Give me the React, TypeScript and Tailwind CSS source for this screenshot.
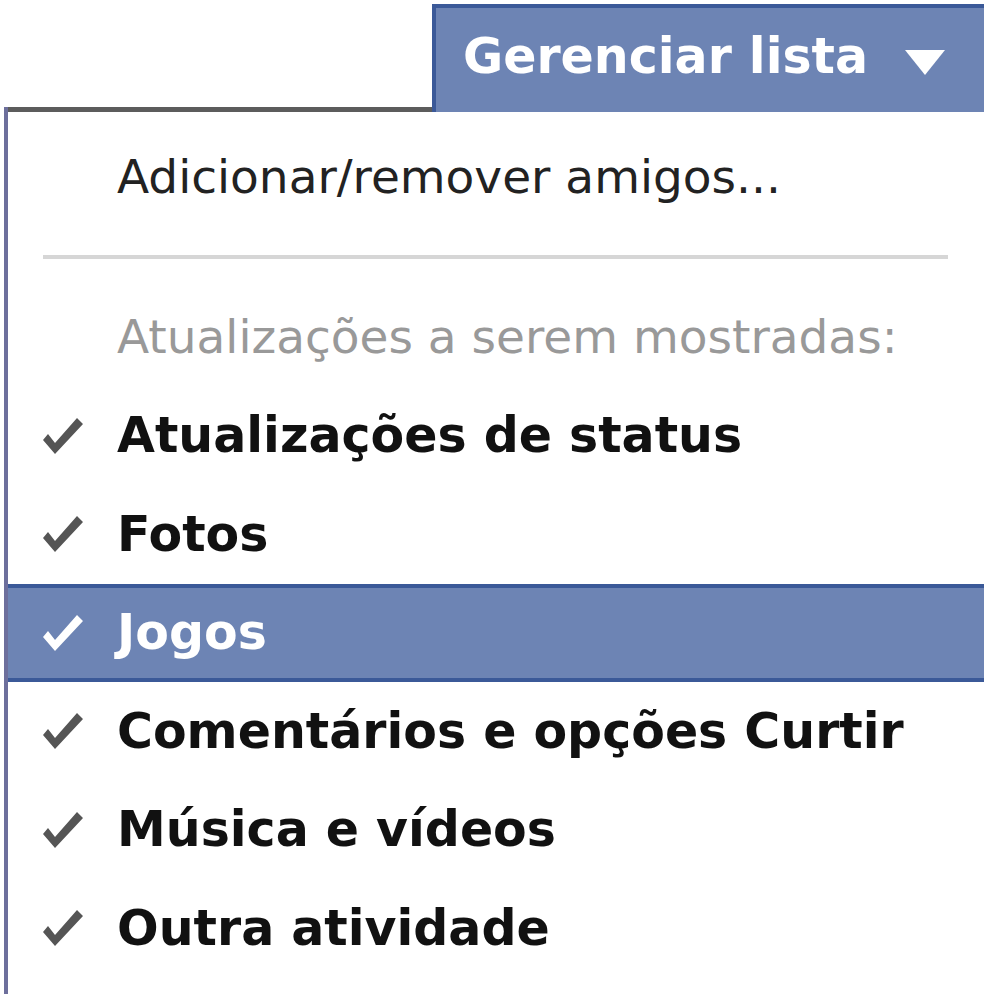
import React from "react";

const items = [
  { label: "Atualizações de status", active: false },
  { label: "Fotos", active: false },
  { label: "Jogos", active: true },
  { label: "Comentários e opções Curtir", active: false },
  { label: "Música e vídeos", active: false },
  { label: "Outra atividade", active: false },
];

function Check({ white }: { white: boolean }) {
  return (
    <svg width="40" height="40" viewBox="0 0 40 40" className="shrink-0">
      <polygon
        points="0,24 5,18 12,27 34,2 40,8 12,38"
        fill={white ? "#ffffff" : "#555555"}
      />
    </svg>
  );
}

export default function App() {
  return (
    <div
      className="w-[984px] h-[994px] bg-white overflow-hidden pt-[4px]"
      style={{ fontFamily: '"DejaVu Sans", Verdana, sans-serif' }}
    >
      <div className="flex h-[108px]">
        <div className="w-[432px] flex flex-col justify-end pl-[4px]">
          <div className="h-[5px] bg-[#5c5c5c] border-l-[4px] border-[#6d6f9c]" />
        </div>
        <div className="flex-1 bg-[#6d84b4] border-t-[4px] border-l-[4px] border-[#3b5998] flex items-start pl-[27px] whitespace-nowrap">
          <span className="text-white font-bold text-[49px] leading-[98px]">
            Gerenciar lista
          </span>
          <span className="ml-[37px] mt-[42px] w-0 h-0 border-l-[20px] border-r-[20px] border-t-[25px] border-x-transparent border-t-white" />
        </div>
      </div>
      <div className="ml-[4px] border-l-[4px] border-[#6d6f9c] pt-[16px] h-[882px] whitespace-nowrap">
        <div className="h-[98px] flex items-center pl-[109px] text-[47px] text-[#222]">
          Adicionar/remover amigos...
        </div>
        <div className="mt-[29px] ml-[35px] mr-[36px] h-[4px] bg-[#d6d6d6]" />
        <div className="mt-[29.5px] h-[98px] flex items-center pl-[109px] text-[47px] text-[#999]">
          Atualizações a serem mostradas:
        </div>
        {items.map((it) => (
          <div
            key={it.label}
            className={
              it.active
                ? "h-[98.5px] flex items-center pl-[35px] bg-[#6d84b4] border-y-[4px] border-[#3b5998] text-white"
                : "h-[98.5px] flex items-center pl-[35px] text-[#111]"
            }
          >
            <Check white={it.active} />
            <span className="ml-[34px] font-bold text-[49px]">{it.label}</span>
          </div>
        ))}
      </div>
    </div>
  );
}
